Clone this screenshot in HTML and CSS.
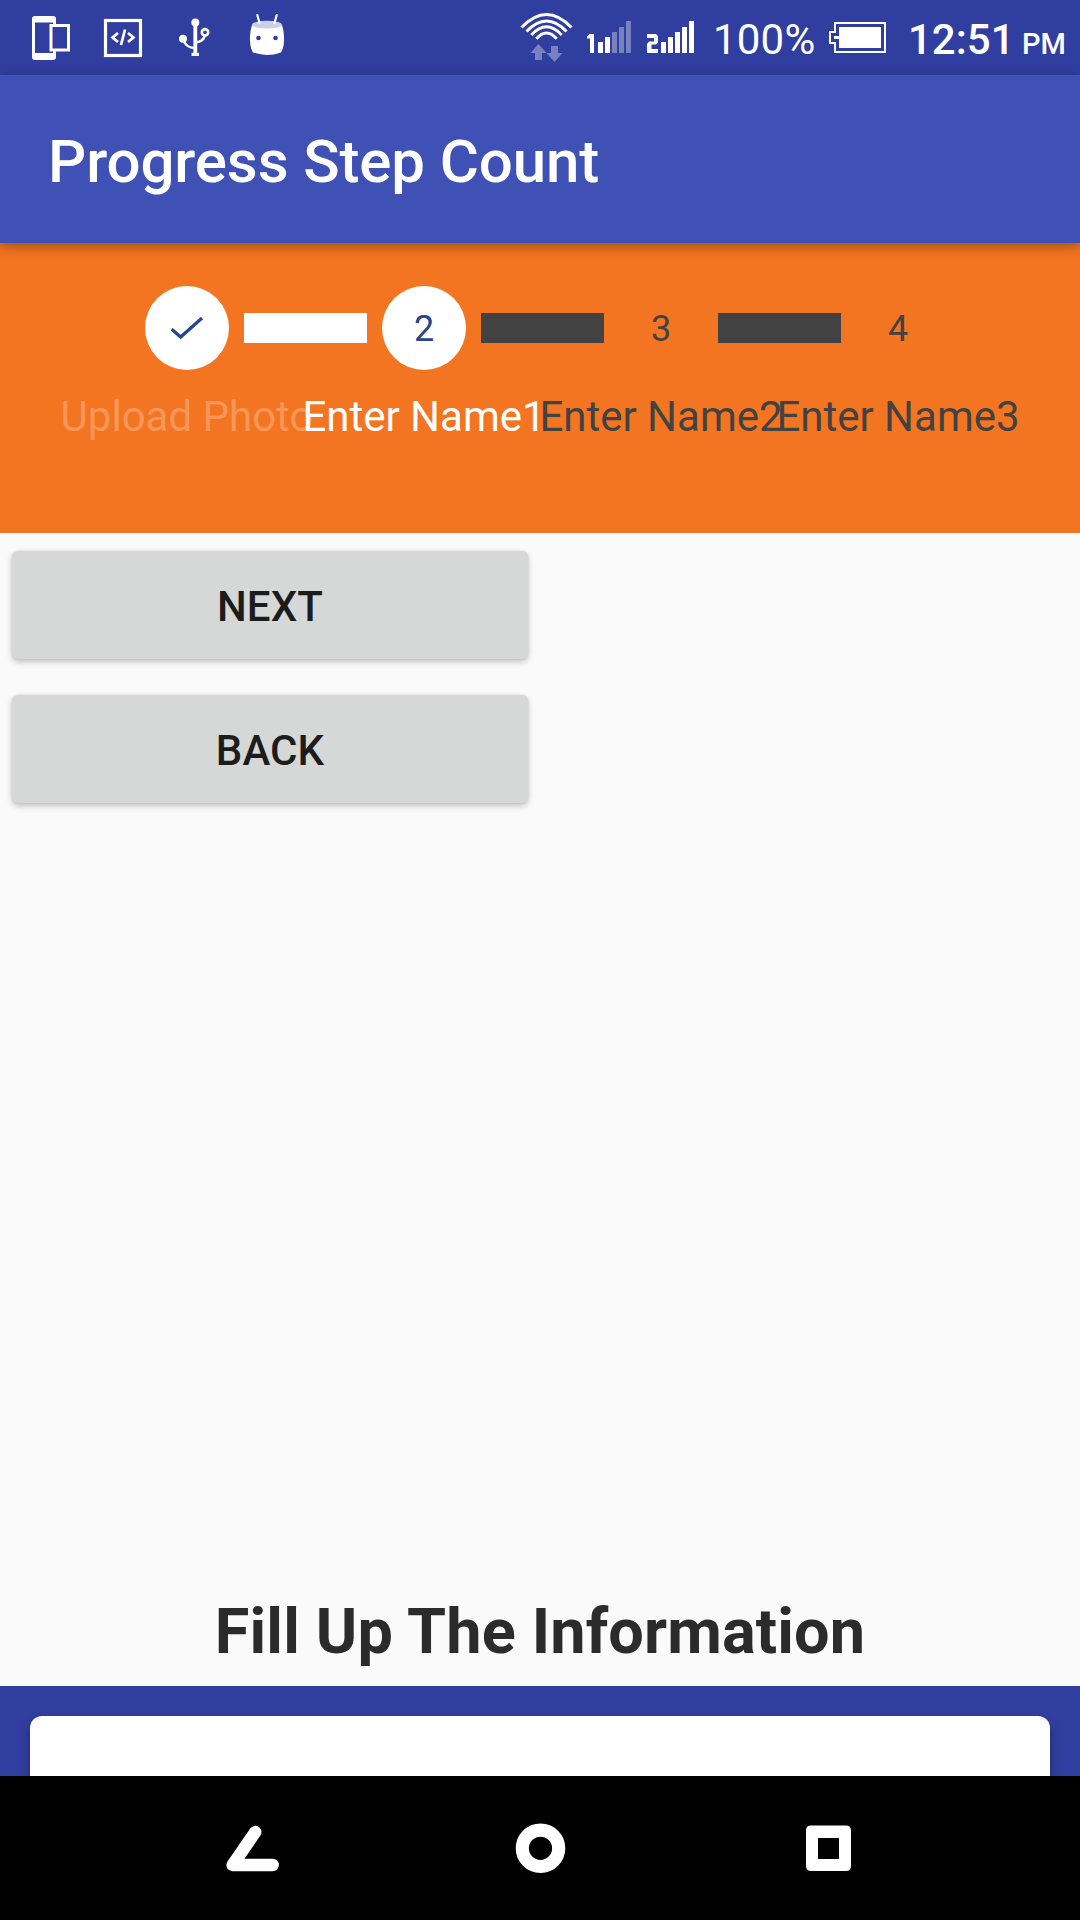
FILE: index.html
```html
<!DOCTYPE html>
<html lang="en">
<head>
<meta charset="utf-8">
<title>Progress Step Count</title>
<link rel="stylesheet" href="styles.css">
</head>
<body>
<div class="screen">
  <div class="status-bar">
    <div class="notifications">
      <svg class="slot" viewBox="15 0 72 75">
        <path fill="#fff" fill-rule="evenodd" d="M35 16H53Q56 16 56 19V24H70V51.500H56V57Q56 60 53 60H35Q32 60 32 57V19Q32 16 35 16ZM35 22.500V53H53V51.500H49.500V24H53V22.500ZM52.500 27V48.500H67V27Z"/>
      </svg>
      <svg class="slot" viewBox="87 0 72 75">
        <rect x="105.500" y="20.500" width="35" height="35" fill="none" stroke="#fff" stroke-width="3.200"/>
        <path d="M118 33L112.500 37.500L118 42M128 33L133.500 37.500L128 42M125 29.500L121 45" fill="none" stroke="#fff" stroke-width="2.700"/>
      </svg>
      <svg class="slot" viewBox="159 0 72 75">
        <g fill="none" stroke="#fff" stroke-width="2.600">
          <path d="M195.300 22V54" stroke-width="3.800"/>
          <path d="M183 39Q185.500 47.500 194 48M205 35Q203.500 41.500 196 42.500"/>
          <circle cx="205" cy="32.300" r="3.200"/>
        </g>
        <g fill="#fff"><circle cx="195.300" cy="22.500" r="4"/><circle cx="183" cy="38.800" r="4"/><path d="M191.500 52.800H199V56H191.500Z"/></g>
      </svg>
      <svg class="slot" viewBox="231 0 72 75">
        <path d="M252 25Q267 31 282 25Q284.500 32 284 41Q283.500 49 281 52.500Q267 57.500 253 52.500Q250.500 49 250 41Q249.500 32 252 25Z" fill="#fff"/>
        <ellipse cx="267" cy="24.700" rx="15" ry="3.900" fill="#cbcfe8"/>
        <path d="M257.300 15L259.500 23M276.700 15L274.500 23" stroke="#fff" stroke-width="2.200" stroke-linecap="round"/>
        <circle cx="258.500" cy="38" r="2.300" fill="#303e9f"/><circle cx="275.500" cy="38" r="2.300" fill="#303e9f"/>
      </svg>
    </div>
    <div class="system">
      <svg class="wide-slot" viewBox="516 0 60 75">
        <g fill="none" stroke="#fff" stroke-width="3">
          <path d="M521.500 27.500Q546.500 1.500 571.500 27.500"/>
          <path d="M526.500 31.500Q546.500 10.500 566.500 31.500"/>
          <path d="M531.300 35Q546.500 18.500 561.700 35"/>
          <path d="M536.300 38.800Q546.500 27 556.700 38.800"/>
        </g>
        <path fill="#7982c1" d="M538.500 44L546.500 53H542V60H535V53H530.500ZM551 46H558V53H562.500L554.500 62L546.500 53H551Z"/>
      </svg>
      <svg class="wide-slot" viewBox="576 0 60 75">
        <path fill="#fff" d="M589.500 34H594V53H590V38.500H587V36.500ZM598 42H603V53H598ZM605 37H610V53H605Z"/>
        <path fill="#7982c1" d="M612 32H617V53H612ZM619 27H624V53H619ZM626 21H631V53H626Z"/>
      </svg>
      <svg class="wide-slot" viewBox="636 0 60 75">
        <path fill="#fff" d="M647 34H656L658 36V42.500L656 44.500H651.500V49H658V53H647V44L649 41.500H654V38H647ZM661 42H666V53H661ZM668 37H673V53H668ZM675 32H680V53H675ZM682 27H687V53H682ZM689 21H694V53H689Z"/>
      </svg>
      <span class="charge">100%</span>
      <svg class="battery" viewBox="824 0 66 75">
        <path d="M834 23H884V52H834V43H829V32H834Z" fill="none" stroke="#fff" stroke-width="2"/>
        <path d="M838 27H880V48H838V39H833V36H838Z" fill="#fff"/>
      </svg>
      <span class="clock">12:51 <span class="meridiem">PM</span></span>
    </div>
  </div>

  <header class="app-bar"><h1 class="app-title">Progress Step Count</h1></header>

  <section class="stepper">
    <div class="track">
      <div class="step reached">
        <svg class="check" viewBox="0 0 34 24"><path d="M1.700 13.200L10.700 21L32 2" fill="none" stroke="#25458c" stroke-width="3.200"/></svg>
      </div>
      <div class="bar passed"></div>
      <div class="step reached">2</div>
      <div class="bar"></div>
      <div class="step">3</div>
      <div class="bar"></div>
      <div class="step">4</div>
    </div>
    <div class="labels">
      <span class="label done">Upload Photo</span>
      <span class="label current">Enter Name1</span>
      <span class="label">Enter Name2</span>
      <span class="label">Enter Name3</span>
    </div>
  </section>

  <main class="content">
    <button class="button">NEXT</button>
    <button class="button">BACK</button>
    <h2 class="form-title">Fill Up The Information</h2>
  </main>

  <section class="form"><div class="card"></div></section>

  <nav class="nav-bar">
    <svg class="nav-icon" viewBox="222 1818 60 60"><path d="M255.300 1832L232.600 1865H272.700" fill="none" stroke="#fff" stroke-width="12.400" stroke-linecap="round" stroke-linejoin="round"/></svg>
    <svg class="nav-icon" viewBox="510 1818 60 60"><circle cx="540.500" cy="1848.300" r="18.200" fill="none" stroke="#fff" stroke-width="13.200"/></svg>
    <svg class="nav-icon" viewBox="798 1818 60 60"><path fill="#fff" fill-rule="evenodd" d="M811 1825.500H846Q851 1825.500 851 1830.500V1866Q851 1871 846 1871H811Q806 1871 806 1866V1830.500Q806 1825.500 811 1825.500ZM818 1838V1859H839V1838Z"/></svg>
  </nav>
</div>
</body>
</html>
```
FILE: styles.css
```css
* { box-sizing: border-box; }

body {
  margin: 0;
  font-family: Roboto, sans-serif;
}

svg { display: block; flex: none; }

.screen {
  width: 1080px;
  height: 1920px;
  display: flex;
  flex-direction: column;
  overflow: hidden;
  background: #fafafa;
}

.status-bar {
  height: 75px;
  flex: none;
  display: flex;
  justify-content: space-between;
  padding: 0 14px 0 15px;
  background: #303e9f;
  color: #fff;
}

.notifications, .system { display: flex; }
.slot { width: 72px; height: 75px; }
.wide-slot { width: 60px; height: 75px; }

.system { width: 550px; line-height: 79px; white-space: nowrap; }
.charge { width: 129px; padding-left: 17px; font-size: 42px; letter-spacing: .2px; }
.battery { width: 66px; height: 75px; }
.clock { padding-left: 17px; font-size: 42px; font-weight: 500; }
.meridiem { font-size: 29px; margin-left: -3px; }

.app-bar {
  height: 168px;
  flex: none;
  display: flex;
  align-items: center;
  padding: 0 48px;
  background: #3f51b5;
  box-shadow: 0 4px 12px rgba(0, 0, 0, .32);
  z-index: 1;
}

.app-title {
  margin: 6px 0 0;
  color: #fff;
  font-size: 60px;
  font-weight: 500;
  line-height: 70px;
  letter-spacing: -.12px;
}

.stepper {
  height: 290px;
  flex: none;
  padding-top: 43px;
  background: #f47521;
  color: #424242;
}

.track {
  display: flex;
  align-items: center;
  gap: 15px;
  padding-left: 145px;
}

.step {
  width: 84px;
  height: 84px;
  display: flex;
  align-items: center;
  justify-content: center;
  border-radius: 50%;
  font-size: 36px;
  line-height: 42px;
  padding-top: 2px;
}

.reached { background: #fff; color: #25458c; }
.check { width: 34px; height: 24px; margin-top: -2px; }
.bar { width: 123px; height: 30px; background: #424242; }
.passed { background: #fff; }

.labels {
  display: grid;
  grid-template-columns: repeat(4, 237px);
  margin: 22px 0 0 68.5px;
}

.label {
  display: flex;
  justify-content: center;
  white-space: nowrap;
  font-size: 42px;
  line-height: 50px;
}

.done { color: rgba(255, 255, 255, .25); }
.current { color: #fff; }

.content {
  flex: 1;
  display: flex;
  flex-direction: column;
  align-items: flex-start;
  gap: 36px;
  padding: 18px 12px 0;
}

.button {
  width: 516px;
  height: 108px;
  padding: 3px 0 0;
  border: 0;
  border-radius: 6px;
  background: #d6d8d7;
  box-shadow: 0 3px 6px rgba(0, 0, 0, .22), 0 0 3px rgba(0, 0, 0, .1);
  color: #1c1c1c;
  font: 500 42px Roboto, sans-serif;
  letter-spacing: .1px;
}

.form-title {
  align-self: center;
  margin: auto 0 16px;
  color: #2b2b2b;
  font-size: 63px;
  font-weight: 700;
  line-height: 76px;
  letter-spacing: .13px;
}

.form {
  height: 90px;
  flex: none;
  padding: 30px 30px 0;
  overflow: hidden;
  background: #303e9f;
}

.card {
  height: 200px;
  border-radius: 12px;
  background: #fff;
  box-shadow: 0 6px 10px rgba(0, 0, 0, .35);
}

.nav-bar {
  height: 144px;
  flex: none;
  display: flex;
  align-items: center;
  justify-content: space-between;
  padding: 0 222px;
  background: #000;
}

.nav-icon { width: 60px; height: 60px; }
```
